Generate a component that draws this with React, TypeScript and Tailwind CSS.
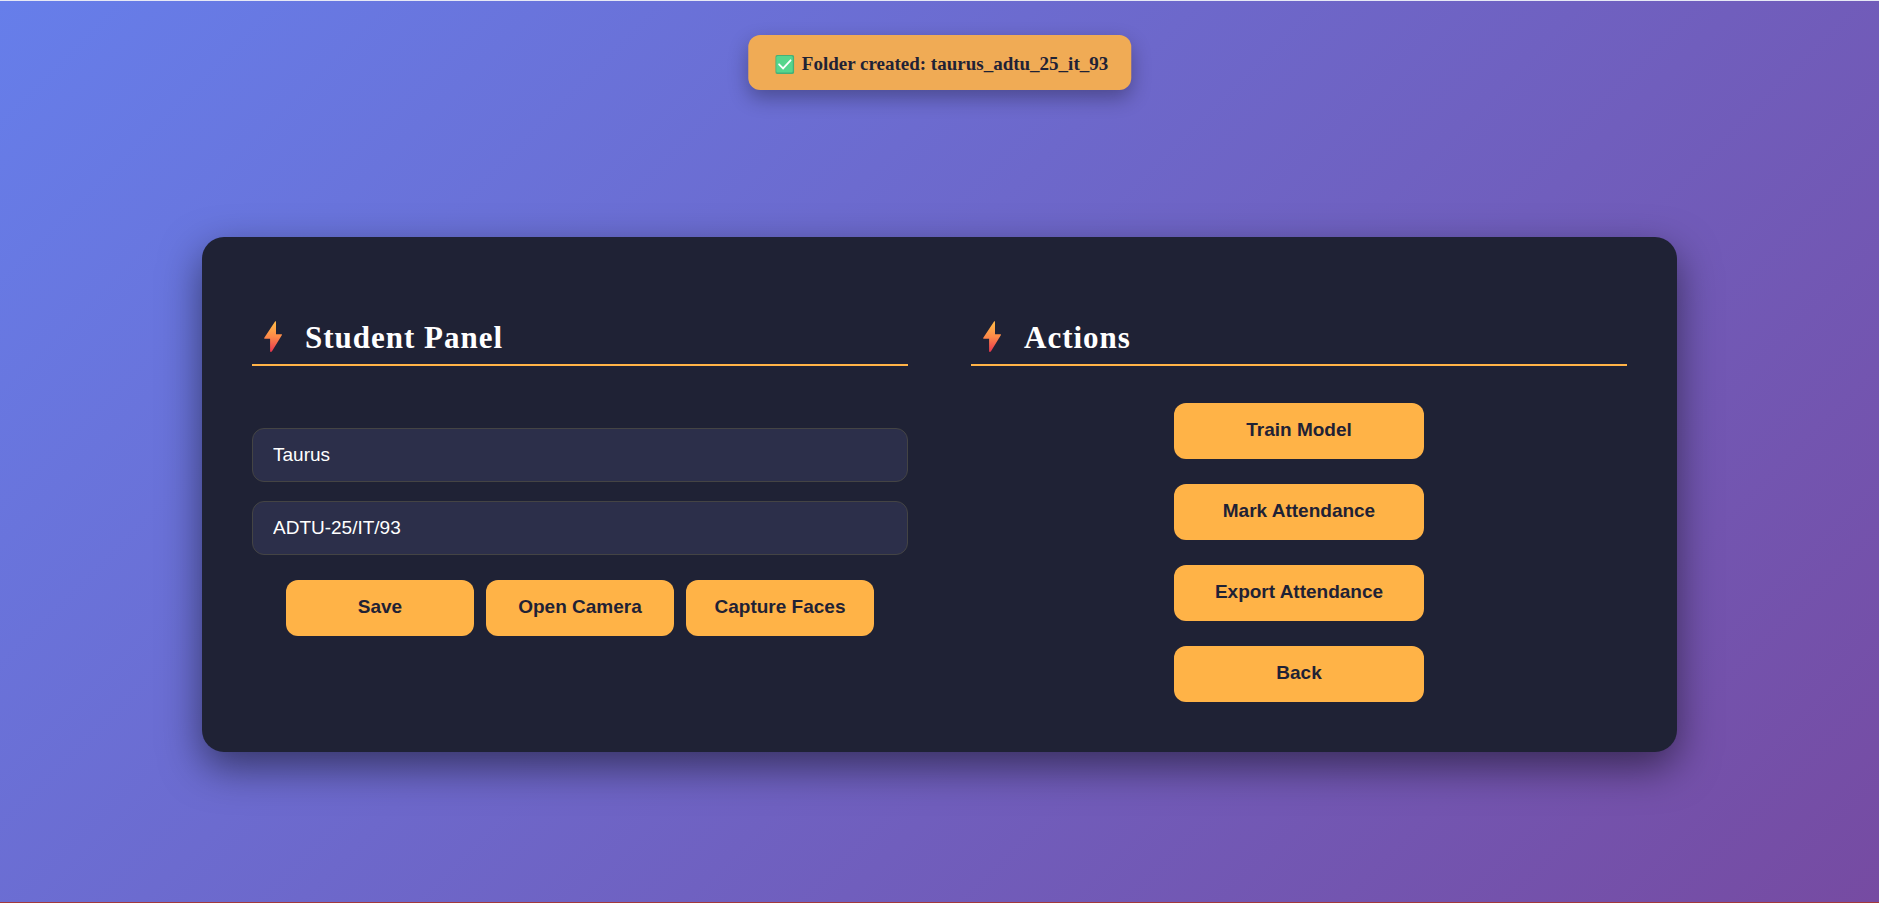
import { useState } from "react";

const BUTTON =
  "h-14 cursor-pointer rounded-xl bg-[#ffb347] pb-0.5 text-center text-[19px] leading-5 font-bold text-[#1f2235] hover:bg-[#ffa726]";
const FIELD =
  "h-[54px] w-full rounded-xl border border-[#444444] bg-[#2c2f4a] px-5 text-[19px] leading-5 text-white outline-none focus:border-[#ffb347]";

function Bolt() {
  return (
    <svg viewBox="0 0 18 31" className="mb-1 h-[31px] w-[18px]" aria-hidden="true">
      <defs>
        <linearGradient id="bolt" x1="0" y1="0" x2="0" y2="1">
          <stop offset="0.1" stopColor="#ffb347" />
          <stop offset="0.5" stopColor="#fd8a48" />
          <stop offset="1" stopColor="#e9354f" />
        </linearGradient>
      </defs>
      <path
        d="M11.2 .3Q12 -.2 12 .8V13.2H17.4Q18.4 13.3 17.8 14.3L8 30.3Q7 31.4 6.1 30.6V17.8H.8Q-.3 17.7 .3 16.8Z"
        fill="url(#bolt)"
      />
    </svg>
  );
}

function CheckBadge() {
  return (
    <svg viewBox="0 0 19 19" className="size-[19px] shrink-0" aria-hidden="true">
      <rect width="19" height="19" rx="2" fill="#45b078" />
      <rect x="1" y="1" width="16.5" height="16.5" rx="1.5" fill="#57d68d" />
      <path d="M3.8 9.3L7.8 13.4L15.3 5.3" fill="none" stroke="#fff" strokeWidth="1.8" strokeLinecap="round" />
    </svg>
  );
}

function PanelHeading({ children }: { children: string }) {
  return (
    <h2 className="flex items-center gap-[23px] border-b-2 border-[#ffb347] pb-2 pl-3 font-['Liberation_Serif',serif] text-[31px] leading-9 font-bold tracking-[1px] text-white">
      <Bolt />
      {children}
    </h2>
  );
}

export default function App() {
  const [name, setName] = useState("Taurus");
  const [roll, setRoll] = useState("ADTU-25/IT/93");

  return (
    <div className="flex min-h-screen flex-col items-center justify-center border-t border-b border-t-[#e6e8f5] border-b-[#a3393a] bg-[linear-gradient(135deg,#667eea,#764ba2)] pt-[86px] font-['Liberation_Sans',sans-serif]">
      <div
        role="status"
        className="absolute top-[35px] left-1/2 flex h-[55px] -translate-x-1/2 items-center gap-2 rounded-xl bg-[#f0ab55] pt-[3px] pr-[23px] pl-[27px] font-['Liberation_Serif',serif] text-[19px] font-bold whitespace-nowrap text-[#1f2235] shadow-[0_8px_20px_rgba(0,0,0,0.3)]"
      >
        <CheckBadge />
        Folder created: taurus_adtu_25_it_93
      </div>

      <main className="grid w-[78.5%] grid-cols-2 gap-[63px] rounded-[22px] bg-[#1f2235] px-[50px] pt-[83px] pb-[50px] shadow-[0_15px_40px_rgba(0,0,0,0.5)]">
        <section>
          <PanelHeading>Student Panel</PanelHeading>
          <form className="mt-[62px] flex flex-col" onSubmit={(e) => e.preventDefault()}>
            <input aria-label="Student name" className={FIELD} value={name} onChange={(e) => setName(e.target.value)} />
            <input
              aria-label="Roll number"
              className={`mt-[19px] ${FIELD}`}
              value={roll}
              onChange={(e) => setRoll(e.target.value)}
            />
            <div className="mt-[25px] flex justify-center gap-3">
              <button type="submit" className={`w-[188px] ${BUTTON}`}>Save</button>
              <button type="button" className={`w-[188px] ${BUTTON}`}>Open Camera</button>
              <button type="button" className={`w-[188px] ${BUTTON}`}>Capture Faces</button>
            </div>
          </form>
        </section>

        <section>
          <PanelHeading>Actions</PanelHeading>
          <div className="mt-[37px] flex flex-col items-center gap-[25px]">
            {["Train Model", "Mark Attendance", "Export Attendance", "Back"].map((label) => (
              <button key={label} type="button" className={`w-[250px] ${BUTTON}`}>
                {label}
              </button>
            ))}
          </div>
        </section>
      </main>
    </div>
  );
}
